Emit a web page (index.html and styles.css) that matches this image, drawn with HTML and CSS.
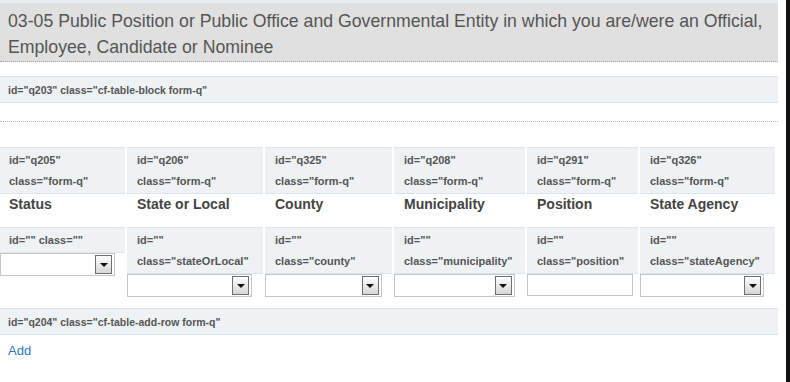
FILE: index.html
```html
<!DOCTYPE html>
<html lang="en">
<head>
  <meta charset="UTF-8" />
  <title>03-05 Public Position</title>
  <link rel="stylesheet" href="styles.css">
</head>
<body>
  <div class="window">
    <div class="page">
      <h2 class="section-title">03-05 Public Position or Public Office and Governmental Entity in which you are/were an Official, Employee, Candidate or Nominee</h2>

      <div class="block">id="q203" class="cf-table-block form-q"</div>

      <hr class="dots" />

      <div class="cols">
        <div class="col col-status">
          <div class="qbox">id="q205"<br>class="form-q"</div>
          <div class="label">Status</div>
          <div class="qbox">id="" class=""</div>
          <div class="select"><span class="arrow"></span></div>
        </div>
        <div class="col col-state">
          <div class="qbox">id="q206"<br>class="form-q"</div>
          <div class="label">State or Local</div>
          <div class="qbox">id=""<br>class="stateOrLocal"</div>
          <div class="select"><span class="arrow"></span></div>
        </div>
        <div class="col col-county">
          <div class="qbox">id="q325"<br>class="form-q"</div>
          <div class="label">County</div>
          <div class="qbox">id=""<br>class="county"</div>
          <div class="select"><span class="arrow"></span></div>
        </div>
        <div class="col col-muni">
          <div class="qbox">id="q208"<br>class="form-q"</div>
          <div class="label">Municipality</div>
          <div class="qbox">id=""<br>class="municipality"</div>
          <div class="select"><span class="arrow"></span></div>
        </div>
        <div class="col col-pos">
          <div class="qbox">id="q291"<br>class="form-q"</div>
          <div class="label">Position</div>
          <div class="qbox">id=""<br>class="position"</div>
          <div class="textbox"></div>
        </div>
        <div class="col col-agency">
          <div class="qbox">id="q326"<br>class="form-q"</div>
          <div class="label">State Agency</div>
          <div class="qbox">id=""<br>class="stateAgency"</div>
          <div class="select"><span class="arrow"></span></div>
        </div>
      </div>

      <div class="block add-block">id="q204" class="cf-table-add-row form-q"</div>
      <a class="add-link" href="#">Add</a>
    </div>
  </div>
</body>
</html>
```

FILE: styles.css
```css
body {
  margin: 0;
  padding: 0;
  font-family: "Liberation Sans", Arial, sans-serif;
  color: #555;
  background-color: #fff;
}

.window {
  width: 786px;
  min-height: 382px;
  border-right: 4px solid #111;
}

.page {
  width: 778px;
}

.section-title {
  margin: 0;
  padding: 5px 0 1px 8px;
  border-top: 3px solid #e8eef4;
  border-bottom: 1px dotted #a8a8a8;
  background-color: #e0e0e0;
  font-size: 17.7px;
  font-weight: normal;
  line-height: 26px;
  color: #555;
}

.block {
  margin-top: 14px;
  padding: 0 8px;
  height: 25px;
  line-height: 26px;
  background-color: #eef2f5;
  border-top: 1px solid #d8e4ef;
  border-bottom: 1px solid #d8e4ef;
  font-size: 10.5px;
  font-weight: bold;
}

.dots {
  margin: 18px 0 0;
  border: none;
  border-top: 1px dotted #bbb;
}

.cols {
  display: flex;
  gap: 2px;
  margin-top: 25px;
}

.col {
  display: flex;
  flex-direction: column;
}

.col-status { width: 125px; }
.col-state { width: 136px; }
.col-county { width: 127px; }
.col-muni { width: 131px; }
.col-pos { width: 111px; }
.col-agency { width: 135px; }

.col-status .qbox,
.col-status .label {
  padding-left: 9px;
}

.qbox {
  padding: 2px 10px 1px;
  background-color: #eef2f5;
  border-top: 1px solid #dce6ef;
  border-bottom: 1px solid #dce6ef;
  font-size: 11px;
  font-weight: bold;
  line-height: 21px;
  white-space: nowrap;
}

.label {
  height: 33px;
  padding: 0 10px;
  box-sizing: border-box;
  font-size: 14px;
  font-weight: bold;
  line-height: 20px;
  color: #444;
}

.select {
  display: flex;
  justify-content: flex-end;
  align-items: center;
  width: 92%;
  height: 23px;
  padding: 0 2px;
  box-sizing: border-box;
  border: 1px solid #c6c6c6;
  background-color: #fff;
}

.col-status .select {
  width: 115px;
}

.arrow {
  display: flex;
  justify-content: center;
  align-items: center;
  width: 15px;
  height: 17px;
  border: 1px solid #6e6e6e;
  background: linear-gradient(#fdfdfd, #d6d6d6);
}

.arrow::after {
  content: "";
  border-left: 4px solid transparent;
  border-right: 4px solid transparent;
  border-top: 4px solid #111;
}

.textbox {
  width: 106px;
  height: 22px;
  box-sizing: border-box;
  border: 1px solid #c6c6c6;
  background-color: #fff;
}

.add-block {
  margin-top: 11px;
}

.add-link {
  display: inline-block;
  margin: 7px 0 0 8px;
  font-size: 13px;
  line-height: 18px;
  color: #2a76c6;
  text-decoration: none;
}
```
